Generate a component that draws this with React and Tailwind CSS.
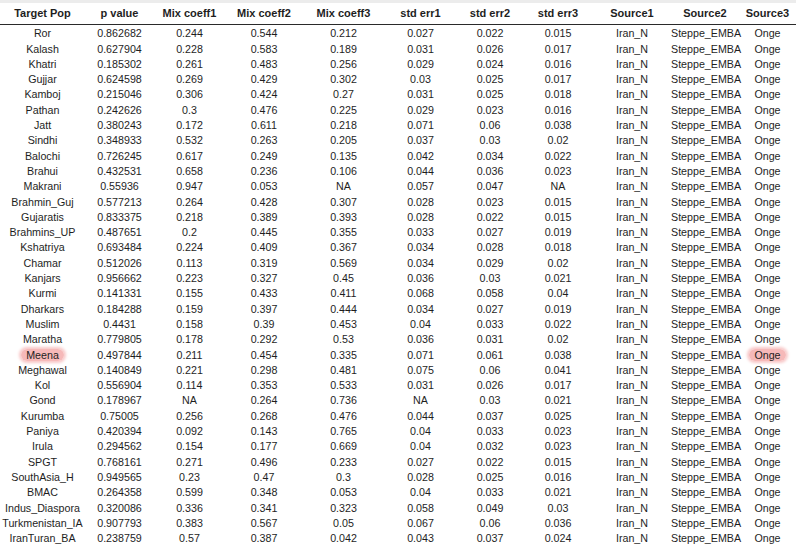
const columns = [
  { label: "Target Pop", w: "w-[85px]" },
  { label: "p value", w: "w-[69px]" },
  { label: "Mix coeff1", w: "w-[71px]" },
  { label: "Mix coeff2", w: "w-[78px]" },
  { label: "Mix coeff3", w: "w-[81px]" },
  { label: "std err1", w: "w-[73px]" },
  { label: "std err2", w: "w-[66px]" },
  { label: "std err3", w: "w-[70px]" },
  { label: "Source1", w: "w-[78px]" },
  { label: "Source2", w: "w-[68px]" },
  { label: "Source3", w: "w-[57px]" },
];

const rows = [
  ["Ror", "0.862682", "0.244", "0.544", "0.212", "0.027", "0.022", "0.015"],
  ["Kalash", "0.627904", "0.228", "0.583", "0.189", "0.031", "0.026", "0.017"],
  ["Khatri", "0.185302", "0.261", "0.483", "0.256", "0.029", "0.024", "0.016"],
  ["Gujjar", "0.624598", "0.269", "0.429", "0.302", "0.03", "0.025", "0.017"],
  ["Kamboj", "0.215046", "0.306", "0.424", "0.27", "0.031", "0.025", "0.018"],
  ["Pathan", "0.242626", "0.3", "0.476", "0.225", "0.029", "0.023", "0.016"],
  ["Jatt", "0.380243", "0.172", "0.611", "0.218", "0.071", "0.06", "0.038"],
  ["Sindhi", "0.348933", "0.532", "0.263", "0.205", "0.037", "0.03", "0.02"],
  ["Balochi", "0.726245", "0.617", "0.249", "0.135", "0.042", "0.034", "0.022"],
  ["Brahui", "0.432531", "0.658", "0.236", "0.106", "0.044", "0.036", "0.023"],
  ["Makrani", "0.55936", "0.947", "0.053", "NA", "0.057", "0.047", "NA"],
  ["Brahmin_Guj", "0.577213", "0.264", "0.428", "0.307", "0.028", "0.023", "0.015"],
  ["Gujaratis", "0.833375", "0.218", "0.389", "0.393", "0.028", "0.022", "0.015"],
  ["Brahmins_UP", "0.487651", "0.2", "0.445", "0.355", "0.033", "0.027", "0.019"],
  ["Kshatriya", "0.693484", "0.224", "0.409", "0.367", "0.034", "0.028", "0.018"],
  ["Chamar", "0.512026", "0.113", "0.319", "0.569", "0.034", "0.029", "0.02"],
  ["Kanjars", "0.956662", "0.223", "0.327", "0.45", "0.036", "0.03", "0.021"],
  ["Kurmi", "0.141331", "0.155", "0.433", "0.411", "0.068", "0.058", "0.04"],
  ["Dharkars", "0.184288", "0.159", "0.397", "0.444", "0.034", "0.027", "0.019"],
  ["Muslim", "0.4431", "0.158", "0.39", "0.453", "0.04", "0.033", "0.022"],
  ["Maratha", "0.779805", "0.178", "0.292", "0.53", "0.036", "0.031", "0.02"],
  ["Meena", "0.497844", "0.211", "0.454", "0.335", "0.071", "0.061", "0.038"],
  ["Meghawal", "0.140849", "0.221", "0.298", "0.481", "0.075", "0.06", "0.041"],
  ["Kol", "0.556904", "0.114", "0.353", "0.533", "0.031", "0.026", "0.017"],
  ["Gond", "0.178967", "NA", "0.264", "0.736", "NA", "0.03", "0.021"],
  ["Kurumba", "0.75005", "0.256", "0.268", "0.476", "0.044", "0.037", "0.025"],
  ["Paniya", "0.420394", "0.092", "0.143", "0.765", "0.04", "0.033", "0.023"],
  ["Irula", "0.294562", "0.154", "0.177", "0.669", "0.04", "0.032", "0.023"],
  ["SPGT", "0.768161", "0.271", "0.496", "0.233", "0.027", "0.022", "0.015"],
  ["SouthAsia_H", "0.949565", "0.23", "0.47", "0.3", "0.028", "0.025", "0.016"],
  ["BMAC", "0.264358", "0.599", "0.348", "0.053", "0.04", "0.033", "0.021"],
  ["Indus_Diaspora", "0.320086", "0.336", "0.341", "0.323", "0.058", "0.049", "0.03"],
  ["Turkmenistan_IA", "0.907793", "0.383", "0.567", "0.05", "0.067", "0.06", "0.036"],
  ["IranTuran_BA", "0.238759", "0.57", "0.387", "0.042", "0.043", "0.037", "0.024"],
];

// pink marker behind the highlighted names
const Marked = ({ children }) => (
  <span className="rounded-full bg-[#f6b9b9] px-[5px] shadow-[0_0_3px_2px_#f8c8c8]">
    {children}
  </span>
);

const App = () => {
  return (
    <div className="w-[796px] h-[548px] bg-white overflow-hidden text-[10.7px] text-[#1e1e1e] font-['Liberation_Sans',Arial,sans-serif]">
      <div className="h-[3px] bg-[#ececec]" />
      <div className="flex h-[22px] items-center border-b-[1.5px] border-[#2a2a2a] text-[11px] font-bold">
        {columns.map((c) => (
          <div key={c.label} className={`${c.w} shrink-0 text-center`}>
            {c.label}
          </div>
        ))}
      </div>
      <div className="pt-[1px]">
        {rows.map((r) => {
          const hi = r[0] === "Meena";
          const cells = [...r, "Iran_N", "Steppe_EMBA", "Onge"];
          return (
            <div key={r[0]} className="flex h-[15.3px] items-center leading-none">
              {cells.map((v, i) => (
                <div key={i} className={`${columns[i].w} shrink-0 text-center whitespace-nowrap`}>
                  {hi && (i === 0 || i === 10) ? <Marked>{v}</Marked> : v}
                </div>
              ))}
            </div>
          );
        })}
      </div>
    </div>
  );
};

export default App;
